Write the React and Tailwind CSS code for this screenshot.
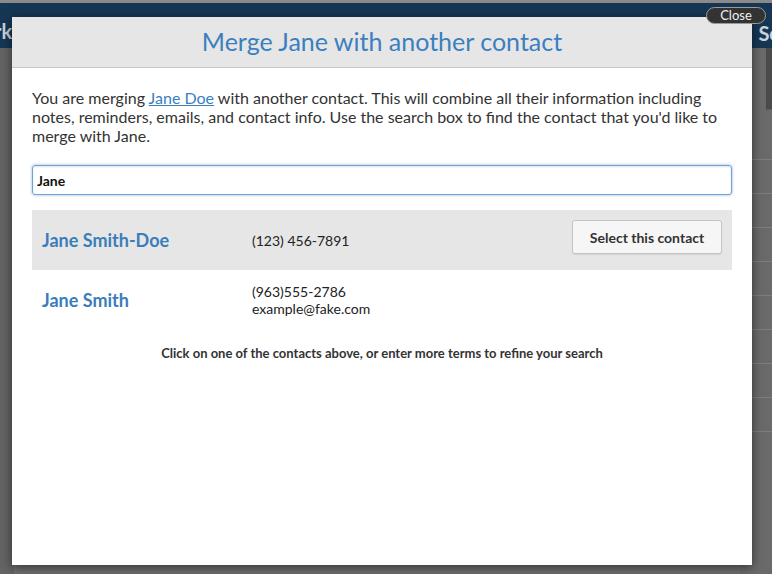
const contacts = [
  { name: "Jane Smith-Doe", lines: ["(123) 456-7891"], active: true },
  { name: "Jane Smith", lines: ["(963)555-2786", "example@fake.com"], active: false },
];

const ContactRow = ({ contact }) => (
  <div
    className={`flex items-center h-[60px] px-[10px] ${
      contact.active ? "bg-[#e6e6e6]" : "bg-white"
    }`}
  >
    <div className="w-[210px] text-[18px] font-bold text-[#3b7dba]">{contact.name}</div>
    <div className="flex-1 text-[14px] leading-[17px] text-[#222]">
      {contact.lines.map((l) => (
        <div key={l}>{l}</div>
      ))}
    </div>
    {contact.active && (
      <button className="mb-[6px] h-[34px] w-[150px] rounded-[3px] border border-[#c4c4c4] bg-[#f6f6f6] text-[14px] font-bold text-[#333] shadow-[0_1px_1px_rgba(0,0,0,0.08)]">
        Select this contact
      </button>
    )}
  </div>
);

export default function App() {
  return (
    <div
      className="relative h-[574px] w-[772px] overflow-hidden bg-[#6e6e6e]"
      style={{ fontFamily: "Lato, 'Open Sans', sans-serif" }}
    >
      {/* page behind the overlay */}
      <div className="h-[3px] bg-[#8a8a8a]" />
      <div className="flex h-[45px] items-start justify-between bg-[#163754] pt-[18px] text-[20px] font-bold text-[#c9d3dc]">
        <span className="-ml-[6px] leading-none">rk</span>
        <span className="-mr-[8px] mt-[2px] leading-none">Se</span>
      </div>
      <div className="flex h-[526px]">
        <div className="w-[14px] bg-[#646464]" />
        <div className="flex-1" />
        <div className="flex w-[32px] flex-col bg-[#6a6a6a]">
          <div className="ml-[26px] h-[62px] border-b border-[#5a5a5a] bg-[#4a4a4a]" />
          <div className="h-[50px] border-b border-[#7e7e7e]" />
          <div className="h-[34px] border-b border-[#7e7e7e]" />
          <div className="h-[34px] border-b border-[#7e7e7e]" />
          <div className="h-[34px] border-b border-[#7e7e7e]" />
          <div className="h-[34px] border-b border-[#7e7e7e]" />
          <div className="h-[34px] border-b border-[#7e7e7e]" />
          <div className="h-[34px] border-b border-[#7e7e7e]" />
          <div className="h-[34px] border-b border-[#7e7e7e]" />
          <div className="h-[34px] border-b border-[#7e7e7e]" />
        </div>
      </div>

      {/* modal */}
      <div className="absolute left-[12px] top-[17px] flex h-[548px] w-[740px] flex-col bg-white shadow-[0_2px_10px_rgba(0,0,0,0.55)]">
        <div className="flex h-[51px] items-center justify-center border-b border-[#c8c8c8] bg-[#e6e6e6]">
          <h1 className="text-[25px] text-[#3a7fc0]">Merge Jane with another contact</h1>
        </div>
        <div className="px-[20px] pt-[20px]">
          <p className="text-[16px] leading-[19px] text-[#333]">
            You are merging{" "}
            <a href="#" className="text-[#3a7fc0] underline">
              Jane Doe
            </a>{" "}
            with another contact. This will combine all their information including notes,
            reminders, emails, and contact info. Use the search box to find the contact that
            you'd like to merge with Jane.
          </p>
          <input
            className="mt-[20px] h-[30px] w-full rounded-[3px] border border-[#6ea3d4] px-[4px] text-[14px] font-bold text-[#111] shadow-[0_0_3px_rgba(82,148,210,0.7),inset_0_1px_2px_rgba(0,0,0,0.12)] outline-none"
            defaultValue="Jane"
          />
          <div className="mt-[15px]">
            {contacts.map((c) => (
              <ContactRow key={c.name} contact={c} />
            ))}
          </div>
          <p className="mt-[14px] text-center text-[13px] font-bold text-[#333]">
            Click on one of the contacts above, or enter more terms to refine your search
          </p>
        </div>
      </div>

      {/* close */}
      <button className="absolute left-[706px] top-[7px] h-[17px] w-[60px] rounded-full border border-[#9a9a9a] bg-[#333] text-[13px] leading-none text-[#f0f0f0]">
        Close
      </button>
    </div>
  );
}
